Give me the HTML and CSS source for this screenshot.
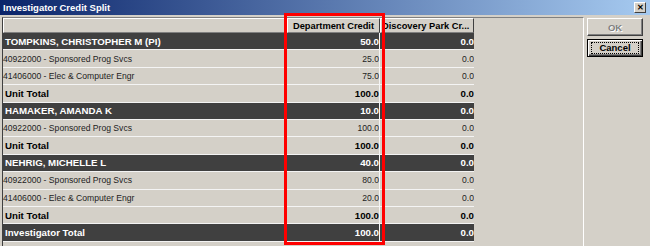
FILE: index.html
```html
<!DOCTYPE html>
<html lang="en">
<head>
    <meta charset="UTF-8">
    <title>Investigator Credit Split</title>
    <link rel="stylesheet" href="styles.css">
</head>
<body>
    <div class="titlebar">
        <span>Investigator Credit Split</span>
        <span class="close">&#x2715;</span>
    </div>

    <div class="window">
        <div class="panel">
            <div class="row head">
                <div class="cell"></div>
                <div class="cell">Department Credit</div>
                <div class="cell">Discovery Park Cr...</div>
            </div>

            <div class="row dark">
                <div class="cell name">TOMPKINS, CHRISTOPHER M (PI)</div>
                <div class="cell num">50.0</div>
                <div class="cell num">0.0</div>
            </div>
            <div class="row">
                <div class="cell name">40922000 - Sponsored Prog Svcs</div>
                <div class="cell num">25.0</div>
                <div class="cell num">0.0</div>
            </div>
            <div class="row">
                <div class="cell name">41406000 - Elec &amp; Computer Engr</div>
                <div class="cell num">75.0</div>
                <div class="cell num">0.0</div>
            </div>
            <div class="row total">
                <div class="cell name">Unit Total</div>
                <div class="cell num">100.0</div>
                <div class="cell num">0.0</div>
            </div>

            <div class="row dark">
                <div class="cell name">HAMAKER, AMANDA K</div>
                <div class="cell num">10.0</div>
                <div class="cell num">0.0</div>
            </div>
            <div class="row">
                <div class="cell name">40922000 - Sponsored Prog Svcs</div>
                <div class="cell num">100.0</div>
                <div class="cell num">0.0</div>
            </div>
            <div class="row total">
                <div class="cell name">Unit Total</div>
                <div class="cell num">100.0</div>
                <div class="cell num">0.0</div>
            </div>

            <div class="row dark">
                <div class="cell name">NEHRIG, MICHELLE L</div>
                <div class="cell num">40.0</div>
                <div class="cell num">0.0</div>
            </div>
            <div class="row">
                <div class="cell name">40922000 - Sponsored Prog Svcs</div>
                <div class="cell num">80.0</div>
                <div class="cell num">0.0</div>
            </div>
            <div class="row">
                <div class="cell name">41406000 - Elec &amp; Computer Engr</div>
                <div class="cell num">20.0</div>
                <div class="cell num">0.0</div>
            </div>
            <div class="row total">
                <div class="cell name">Unit Total</div>
                <div class="cell num">100.0</div>
                <div class="cell num">0.0</div>
            </div>

            <div class="row dark">
                <div class="cell name">Investigator Total</div>
                <div class="cell num">100.0</div>
                <div class="cell num">0.0</div>
            </div>
        </div>

        <div class="side">
            <button class="btn disabled" type="button">OK</button>
            <button class="btn default" type="button"><span class="focus">Cancel</span></button>
        </div>
    </div>

    <!-- annotation drawn over the grid -->
    <div class="highlight"></div>
</body>
</html>
```

FILE: styles.css
```css
body {
    font-family: "Liberation Sans", Arial, sans-serif;
    margin: 0;
    padding: 0;
    width: 650px;
    height: 246px;
    overflow: hidden;
    background-color: #d4d0c8;
    position: relative;
}

.titlebar {
    height: 15px;
    padding: 0 4px 0 3px;
    display: flex;
    align-items: center;
    justify-content: space-between;
    background: linear-gradient(to right, #0a246a, #a6caf0);
    color: #fff;
    font-size: 9.5px;
    font-weight: bold;
}

.close {
    width: 12px;
    height: 11px;
    box-sizing: border-box;
    display: flex;
    align-items: center;
    justify-content: center;
    background-color: #d4d0c8;
    border: 1px solid;
    border-color: #fff #404040 #404040 #fff;
    color: #000;
    font-size: 8px;
    font-weight: bold;
}

.window {
    display: flex;
    padding-top: 2px;
}

.panel {
    width: 582px;
    height: 229px;
    margin-left: 2px;
    box-sizing: border-box;
    border-left: 1px solid #404040;
    border-right: 1px solid #fff;
    border-top: 1px solid #808080;
}

.row {
    display: grid;
    grid-template-columns: 284px 93px 94px;
    height: 17.4px;
    box-sizing: border-box;
    border-bottom: 1px solid #f4f4f4;
    width: 471px;
    font-size: 8.6px;
    color: #222;
}

.cell {
    display: flex;
    align-items: center;
    overflow: hidden;
    white-space: nowrap;
}

.cell:nth-child(2) {
    border-right: 1px solid #f4f4f4;
}

.name {
    padding-left: 0;
}

.num {
    justify-content: flex-end;
}

.head {
    height: 15px;
    border-bottom: none;
    font-size: 9.3px;
    font-weight: bold;
    color: #000;
}

.head .cell {
    box-sizing: border-box;
    border: 1px solid;
    border-color: #fff #404040 #808080 #fff;
    justify-content: center;
}

.head .cell:nth-child(3) {
    justify-content: flex-start;
    padding-left: 1px;
}

.total {
    font-size: 9.7px;
    font-weight: bold;
    color: #000;
}

.total .name,
.dark .name {
    padding-left: 2px;
}

.dark {
    background-color: #404040;
    color: #fff;
    font-size: 9.7px;
    font-weight: bold;
}

.side {
    display: flex;
    flex-direction: column;
    gap: 3px;
    padding: 1px 0 0 3px;
}

.btn {
    width: 56px;
    height: 18px;
    padding: 0;
    box-sizing: border-box;
    background-color: #d4d0c8;
    border: 1px solid;
    border-color: #fff #404040 #404040 #fff;
    box-shadow: inset -1px -1px #808080;
    font-family: "Liberation Sans", Arial, sans-serif;
    font-size: 9.5px;
    font-weight: bold;
    display: flex;
    align-items: center;
    justify-content: center;
}

.disabled {
    color: #808080;
    text-shadow: 1px 1px #fff;
}

.default {
    border: 1px solid #000;
    box-shadow: inset 1px 1px #fff, inset -1px -1px #404040, inset -2px -2px #808080;
    color: #000;
}

.focus {
    display: block;
    width: 46px;
    height: 10px;
    line-height: 10px;
    outline: 1px dotted #000;
}

.highlight {
    position: absolute;
    left: 284px;
    top: 13px;
    width: 101px;
    height: 232px;
    box-sizing: border-box;
    border: 3px solid #f00;
}
```
